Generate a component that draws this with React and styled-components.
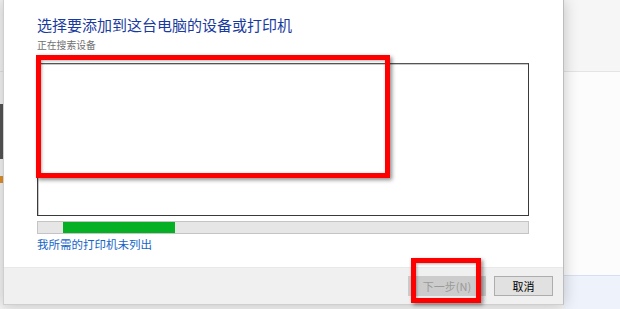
import React from "react";
import styled, { createGlobalStyle } from "styled-components";

const Global = createGlobalStyle`
  html, body { margin: 0; padding: 0; }
  body {
    width: 620px; height: 309px; overflow: hidden;
    font-family: "Noto Sans CJK SC", "Noto Sans", sans-serif;
    background: #f2f2f2;
  }
`;

const Page = styled.div`
  position: relative;
  width: 620px;
  height: 309px;
  display: flex;
  overflow: hidden;
`;

const LeftStrip = styled.div`
  width: 3px;
  flex: none;
  background: #f3f3f3;
  display: flex;
  flex-direction: column;
`;

const StripGap = styled.div`
  height: ${(p) => p.h}px;
  flex: none;
  background: ${(p) => p.bg || "transparent"};
  border-top: ${(p) => (p.line ? "1px solid #e2e2e2" : "none")};
`;

const Dialog = styled.div`
  width: 561px;
  height: 305px;
  flex: none;
  box-sizing: border-box;
  border-left: 1px solid #cfcfcf;
  border-right: 1px solid #bdbdbd;
  border-bottom: 1px solid #cfcfcf;
  background: #ffffff;
  display: flex;
  flex-direction: column;
  box-shadow: 0 0 14px rgba(0, 0, 0, 0.22);
  position: relative;
  z-index: 1;
`;

const Content = styled.div`
  flex: 1;
  padding: 15px 0 0 33px;
  display: flex;
  flex-direction: column;
`;

const Title = styled.div`
  font-size: 15px;
  line-height: 20px;
  color: #1a3b9e;
`;

const Sub = styled.div`
  margin-top: 3px;
  font-size: 9.8px;
  line-height: 14px;
  color: #6f6f6f;
`;

const ListBox = styled.div`
  margin-top: 11px;
  width: 492px;
  height: 153px;
  box-sizing: border-box;
  border: 1px solid #3a3a3a;
  border-top-color: #555;
  box-shadow: inset 1px 1px 0 #c8c8c8;
  background: #fff;
`;

const Progress = styled.div`
  margin-top: 5px;
  width: 492px;
  height: 13px;
  box-sizing: border-box;
  border: 1px solid #c4c4c4;
  background: #e6e6e6;
  display: flex;
  padding-left: 25px;
`;

const Fill = styled.div`
  height: 100%;
  background: #06b025;
`;

const Link = styled.a`
  margin-top: 3px;
  font-size: 11.5px;
  line-height: 15px;
  color: #1565c8;
  text-decoration: none;
  cursor: pointer;
  align-self: flex-start;
`;

const Footer = styled.div`
  height: 37px;
  flex: none;
  background: #f0f0f0;
  border-top: 1px solid #e8e8e8;
  box-sizing: border-box;
  display: flex;
  align-items: center;
  justify-content: flex-end;
  gap: 8px;
  padding: 0 10px 0 0;
`;

const Button = styled.button`
  height: 20px;
  width: ${(p) => p.w}px;
  box-sizing: border-box;
  padding: 0;
  font-family: "Noto Sans CJK SC", "Noto Sans", sans-serif;
  font-size: 11px;
  line-height: 18px;
  border: 1px solid ${(p) => (p.disabled ? "#cccccc" : "#adadad")};
  background: ${(p) => (p.disabled ? "#cccccc" : "#e1e1e1")};
  color: ${(p) => (p.disabled ? "#9a9a9a" : "#000")};
`;

const RightArea = styled.div`
  flex: 1;
  display: flex;
  flex-direction: column;
`;

const Band = styled.div`
  height: ${(p) => (p.h ? p.h + "px" : "auto")};
  flex: ${(p) => (p.h ? "none" : "1")};
  background: ${(p) => p.bg};
  border-top: ${(p) => p.line || "none"};
  box-sizing: border-box;
`;

const Annotation = styled.div`
  position: absolute;
  box-sizing: border-box;
  border: 5px solid #ff0000;
  box-shadow: 2px 2px 4px rgba(0, 0, 0, 0.45), inset 1px 1px 3px rgba(0, 0, 0, 0.3);
  z-index: 5;
  pointer-events: none;
`;

export default function App() {
  const progress = 112;
  return (
    <>
      <Global />
      <Page>
        <LeftStrip>
          <StripGap h={71} />
          <StripGap h={32} line />
          <StripGap h={55} bg="#555555" />
          <StripGap h={17} />
          <StripGap h={7} bg="#e0912e" />
        </LeftStrip>
        <Dialog>
          <Content>
            <Title>选择要添加到这台电脑的设备或打印机</Title>
            <Sub>正在搜索设备</Sub>
            <ListBox />
            <Progress>
              <Fill style={{ width: progress }} />
            </Progress>
            <Link>我所需的打印机未列出</Link>
          </Content>
          <Footer>
            <Button w={78} disabled>
              下一步(N)
            </Button>
            <Button w={59}>取消</Button>
          </Footer>
        </Dialog>
        <RightArea>
          <Band h={71} bg="#f6f6f6" />
          <Band bg="#fcfcfc" line="1px solid #e4e4e4" />
          <Band h={34} bg="#eef2fb" line="1px solid #d6e0f2" />
        </RightArea>
        <Annotation style={{ left: 36, top: 55, width: 354, height: 123 }} />
        <Annotation style={{ left: 411, top: 258, width: 70, height: 45 }} />
      </Page>
    </>
  );
}
